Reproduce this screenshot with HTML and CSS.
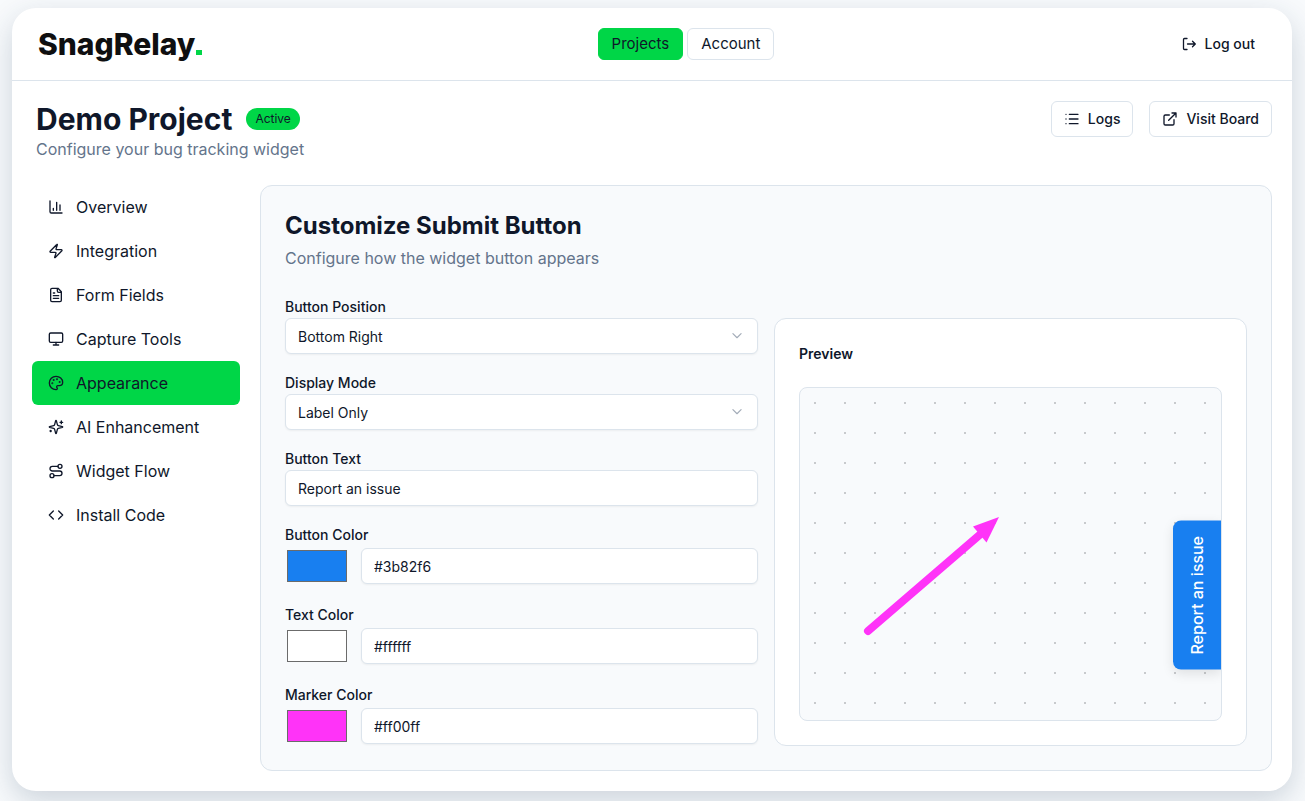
FILE: index.html
```html
<!DOCTYPE html>
<html lang="en">
<head>
    <meta charset="UTF-8">
    <meta name="viewport" content="width=device-width, initial-scale=1.0">
    <title>SnagRelay - Demo Project</title>
    <link rel="stylesheet" href="styles.css">
</head>
<body>
    <div class="app">
        <header class="topbar">
            <a href="#" class="logo">SnagRelay<span class="logo-dot"></span></a>
            <nav class="topnav">
                <a href="#" class="btn btn-small btn-active">Projects</a>
                <a href="#" class="btn btn-small">Account</a>
            </nav>
            <button type="button" class="btn btn-small btn-plain">
                <svg class="icon icon-exit" viewBox="0 0 16 16"><path d="M6 2.5H3.5a1 1 0 0 0-1 1v9a1 1 0 0 0 1 1H6M6.500 8h7.500M11.500 5.200L14.300 8l-2.800 2.800"/></svg>
                Log out
            </button>
        </header>

        <main>
            <div class="page-head">
                <div class="page-title">
                    <div class="title-row">
                        <h1>Demo Project</h1>
                        <span class="badge">Active</span>
                    </div>
                    <p class="muted">Configure your bug tracking widget</p>
                </div>
                <div class="actions">
                    <button type="button" class="btn">
                        <svg class="icon" viewBox="0 0 24 24"><path d="M3 5h.01M3 12h.01M3 19h.01M8 5h13M8 12h13M8 19h13"/></svg>
                        Logs
                    </button>
                    <a href="#" class="btn">
                        <svg class="icon" viewBox="0 0 24 24"><path d="M15 3h6v6M10 14L21 3M18 13v6a2 2 0 0 1-2 2H5a2 2 0 0 1-2-2V8a2 2 0 0 1 2-2h6"/></svg>
                        Visit Board
                    </a>
                </div>
            </div>

            <div class="content">
                <nav class="sidebar">
                    <a href="#">
                        <svg class="icon" viewBox="0 0 24 24"><path d="M3 3v16a2 2 0 0 0 2 2h16M18 17V9M13 17V5M8 17v-3"/></svg>
                        Overview
                    </a>
                    <a href="#">
                        <svg class="icon" viewBox="0 0 24 24"><path d="M4 14a1 1 0 0 1-.78-1.630l9.900-10.200a.5.5 0 0 1 .86.460l-1.920 6.020A1 1 0 0 0 13 10h7a1 1 0 0 1 .78 1.630l-9.900 10.200a.5.5 0 0 1-.86-.460l1.920-6.020A1 1 0 0 0 11 14z"/></svg>
                        Integration
                    </a>
                    <a href="#">
                        <svg class="icon" viewBox="0 0 24 24"><path d="M15 2H6a2 2 0 0 0-2 2v16a2 2 0 0 0 2 2h12a2 2 0 0 0 2-2V7zM14 2v4a2 2 0 0 0 2 2h4M10 9H8M16 13H8M16 17H8"/></svg>
                        Form Fields
                    </a>
                    <a href="#">
                        <svg class="icon" viewBox="0 0 24 24"><rect x="2" y="3" width="20" height="14" rx="2"/><path d="M8 21h8M12 17v4"/></svg>
                        Capture Tools
                    </a>
                    <a href="#" class="active">
                        <svg class="icon" viewBox="0 0 24 24"><path d="M12 22a1 1 0 0 1 0-20 10 9 0 0 1 10 9 5 5 0 0 1-5 5h-2.250a1.750 1.750 0 0 0-1.400 2.800l.3.4a1.750 1.750 0 0 1-1.400 2.800z"/><circle class="dot" cx="13.500" cy="6.500" r=".5"/><circle class="dot" cx="17.500" cy="10.500" r=".5"/><circle class="dot" cx="6.500" cy="12.500" r=".5"/><circle class="dot" cx="8.500" cy="7.500" r=".5"/></svg>
                        Appearance
                    </a>
                    <a href="#">
                        <svg class="icon" viewBox="0 0 24 24"><path d="M9.937 15.500A2 2 0 0 0 8.500 14.063l-6.135-1.582a.5.5 0 0 1 0-.962L8.500 9.936A2 2 0 0 0 9.937 8.500l1.582-6.135a.5.5 0 0 1 .963 0L14.063 8.500A2 2 0 0 0 15.500 9.937l6.135 1.581a.5.5 0 0 1 0 .964L15.500 14.063a2 2 0 0 0-1.437 1.437l-1.582 6.135a.5.5 0 0 1-.963 0zM20 3v4M22 5h-4M4 17v2M5 18H3"/></svg>
                        AI Enhancement
                    </a>
                    <a href="#">
                        <svg class="icon" viewBox="0 0 24 24"><circle cx="6" cy="19" r="3"/><path d="M9 19h8.500a3.500 3.500 0 0 0 0-7h-11a3.500 3.500 0 0 1 0-7H15"/><circle cx="18" cy="5" r="3"/></svg>
                        Widget Flow
                    </a>
                    <a href="#">
                        <svg class="icon" viewBox="0 0 24 24"><path d="M16 18l6-6-6-6M8 6l-6 6 6 6"/></svg>
                        Install Code
                    </a>
                </nav>

                <section class="panel">
                    <h2>Customize Submit Button</h2>
                    <p class="muted">Configure how the widget button appears</p>

                    <div class="columns">
                        <form class="fields">
                            <div class="field">
                                <label for="position">Button Position</label>
                                <div class="select">
                                    <select id="position">
                                        <option>Bottom Right</option>
                                        <option>Bottom Left</option>
                                    </select>
                                    <svg class="icon chevron" viewBox="0 0 24 24"><path d="M5 8l7 7 7-7"/></svg>
                                </div>
                            </div>
                            <div class="field">
                                <label for="mode">Display Mode</label>
                                <div class="select">
                                    <select id="mode">
                                        <option>Label Only</option>
                                        <option>Icon Only</option>
                                    </select>
                                    <svg class="icon chevron" viewBox="0 0 24 24"><path d="M5 8l7 7 7-7"/></svg>
                                </div>
                            </div>
                            <div class="field">
                                <label for="buttonText">Button Text</label>
                                <input type="text" id="buttonText" value="Report an issue">
                            </div>
                            <div class="field">
                                <label for="buttonColor">Button Color</label>
                                <div class="color-row">
                                    <input type="color" aria-label="Pick button color" value="#187ff0">
                                    <input type="text" id="buttonColor" value="#3b82f6">
                                </div>
                            </div>
                            <div class="field">
                                <label for="textColor">Text Color</label>
                                <div class="color-row">
                                    <input type="color" aria-label="Pick text color" value="#ffffff">
                                    <input type="text" id="textColor" value="#ffffff">
                                </div>
                            </div>
                            <div class="field">
                                <label for="markerColor">Marker Color</label>
                                <div class="color-row">
                                    <input type="color" aria-label="Pick marker color" value="#ff33f8">
                                    <input type="text" id="markerColor" value="#ff00ff">
                                </div>
                            </div>
                        </form>

                        <div class="preview">
                            <h3>Preview</h3>
                            <div class="canvas">
                                <svg class="marker" viewBox="0 0 136 120"><path class="marker-line" d="M5 115L120 16"/><path class="marker-head" d="M136 1L110 10.500 123.500 26.500z"/></svg>
                                <button type="button" class="widget-btn">Report an issue</button>
                            </div>
                        </div>
                    </div>
                </section>
            </div>
        </main>
    </div>
</body>
</html>
```

FILE: styles.css
```css
* {
    box-sizing: border-box;
}

body {
    margin: 0;
    padding: 8px 13px 10px 12px;
    background-color: #f8fafc;
    color: #0f172a;
    font-family: Inter, "Liberation Sans", sans-serif;
    font-size: 16px;
    line-height: 24px;
}

h1, h2, h3, p {
    margin: 0;
}

a {
    color: inherit;
    text-decoration: none;
}

input, select, button {
    font-family: inherit;
    color: inherit;
}

.app {
    background-color: #fff;
    border-radius: 24px;
    box-shadow: 0 10px 30px rgba(30, 60, 90, 0.2);
}

/* Top bar */
.topbar {
    display: flex;
    align-items: center;
    justify-content: space-between;
    height: 73px;
    padding: 0 24px;
    border-bottom: 1px solid #dce4ec;
}

.logo {
    display: flex;
    align-items: baseline;
    padding: 0 2px;
    color: #0f0f10;
    font-size: 30px;
    font-weight: 800;
}

.logo-dot {
    width: 6px;
    height: 5px;
    margin-left: 1px;
    background-color: #00d647;
}

.topnav {
    display: flex;
    gap: 4px;
}

.btn {
    display: inline-flex;
    align-items: center;
    gap: 8px;
    height: 36px;
    padding: 0 12px;
    border: 1px solid #dce4ec;
    border-radius: 6px;
    background-color: #fff;
    font-size: 14px;
    font-weight: 500;
    line-height: 20px;
    white-space: nowrap;
    cursor: pointer;
}

.btn-small {
    height: 32px;
}

.topnav .btn {
    padding: 0 13px;
    font-size: 15px;
    font-weight: 400;
}

.btn-active {
    background-color: #00d647;
    border-color: #00d647;
}

.btn-plain {
    border-color: transparent;
}

.icon {
    flex-shrink: 0;
    width: 16px;
    height: 16px;
    fill: none;
    stroke: currentColor;
    stroke-width: 2;
    stroke-linecap: round;
    stroke-linejoin: round;
}

.icon .dot {
    fill: currentColor;
}

.icon-exit {
    width: 16px;
    height: 16px;
    stroke-width: 1.3;
}

/* Page heading */
main {
    padding: 20px;
}

.page-head {
    display: flex;
    justify-content: space-between;
    align-items: flex-start;
    margin-bottom: 24px;
}

.page-title {
    padding-left: 4px;
}

.title-row {
    display: flex;
    align-items: center;
    gap: 14px;
}

h1 {
    font-size: 30px;
    font-weight: 700;
    line-height: 36px;
}

.badge {
    height: 22px;
    padding: 0 9px;
    border-radius: 11px;
    background-color: #00d647;
    font-size: 12px;
    line-height: 22px;
}

.muted {
    color: #64748b;
}

.actions {
    display: flex;
    gap: 16px;
}

.content {
    display: flex;
    gap: 20px;
}

/* Sidebar */
.sidebar {
    flex: 0 0 208px;
}

.sidebar a {
    display: flex;
    align-items: center;
    gap: 12px;
    height: 44px;
    padding: 0 16px;
    border-radius: 6px;
}

.sidebar a.active {
    background-color: #00d647;
}

/* Settings panel */
.panel {
    flex: 1;
    min-width: 0;
    padding: 24px;
    border: 1px solid #dce4ec;
    border-radius: 12px;
    background-color: #f8fafc;
}

h2 {
    margin-bottom: 4px;
    font-size: 24px;
    font-weight: 700;
    line-height: 32px;
}

.columns {
    display: grid;
    grid-template-columns: 1fr 1fr;
    gap: 16px;
    margin-top: 28px;
}

.fields {
    display: flex;
    flex-direction: column;
    gap: 20px;
}

label {
    display: block;
    padding-bottom: 2px;
    font-size: 14px;
    font-weight: 500;
    line-height: 18px;
}

input[type="text"],
select {
    display: block;
    width: 100%;
    height: 36px;
    padding: 0 12px;
    border: 1px solid #dce4ec;
    border-radius: 6px;
    background-color: #fff;
    box-shadow: 0 1px 2px rgba(0, 0, 0, 0.05);
    font-size: 14px;
    appearance: none;
}

.select {
    position: relative;
}

.chevron {
    position: absolute;
    top: 11px;
    right: 14px;
    width: 14px;
    height: 14px;
    color: #a3acb8;
    pointer-events: none;
}

.color-row {
    display: flex;
    align-items: center;
    gap: 12px;
    height: 40px;
}

input[type="color"] {
    flex: 0 0 64px;
    height: 36px;
    padding: 2px;
    border: none;
    background: none;
    appearance: none;
}

input[type="color"]::-webkit-color-swatch-wrapper {
    padding: 0;
}

input[type="color"]::-webkit-color-swatch {
    border: 1px solid #6b6b6b;
    border-radius: 0;
}

/* Preview */
.preview {
    display: flex;
    flex-direction: column;
    margin-top: 20px;
    padding: 24px;
    border: 1px solid #dce4ec;
    border-radius: 12px;
    background-color: #fff;
}

h3 {
    margin-bottom: 22px;
    font-size: 14px;
    font-weight: 600;
    line-height: 22px;
}

.canvas {
    position: relative;
    flex: 1;
    overflow: hidden;
    border: 1px solid #dce4ec;
    border-radius: 8px;
    background-color: #f8fafc;
    background-image: radial-gradient(circle, #c8cacd 1px, transparent 1px);
    background-size: 30px 30px;
}

.marker {
    position: absolute;
    top: 128px;
    left: 63px;
    width: 136px;
    height: 120px;
}

.marker-line {
    fill: none;
    stroke: #ff33f8;
    stroke-width: 8;
    stroke-linecap: round;
}

.marker-head {
    fill: #ff33f8;
}

.widget-btn {
    position: absolute;
    right: 0;
    bottom: 50px;
    width: 48px;
    padding: 15px 12px;
    border: none;
    border-radius: 0 8px 8px 0;
    background-color: #187ff0;
    box-shadow: 0 -4px 12px rgba(0, 0, 0, 0.1);
    color: #fff;
    font-size: 16px;
    font-weight: 500;
    line-height: 24px;
    writing-mode: vertical-rl;
    transform: rotate(180deg);
}
```
